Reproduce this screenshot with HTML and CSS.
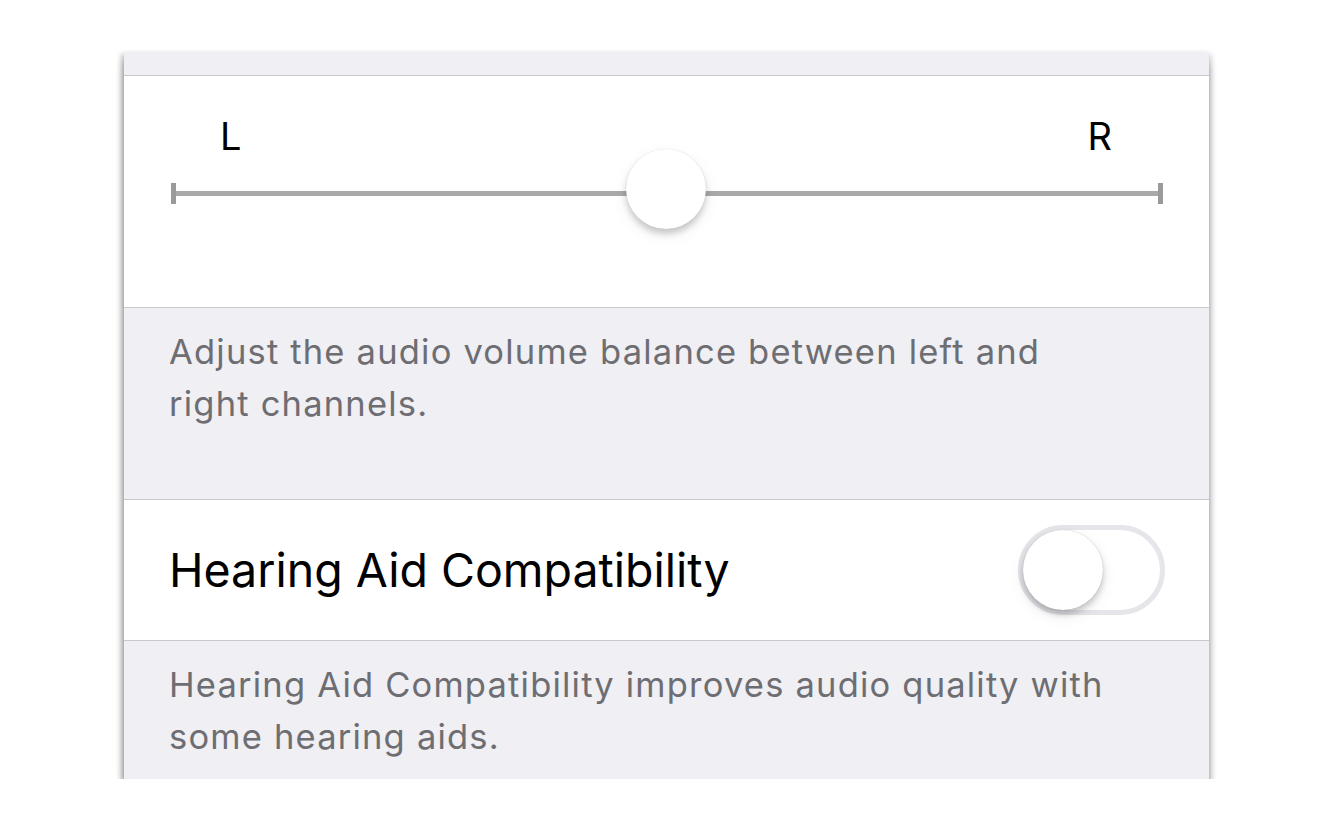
FILE: index.html
```html
<!DOCTYPE html>
<html>
<head>
<meta charset="utf-8">
<link rel="stylesheet" href="styles.css">
</head>
<body>
<div class="card">
  <div class="strip"></div>
  <div class="slider-section">
    <div class="labels"><span>L</span><span>R</span></div>
    <div class="track">
      <span class="cap cap-left"></span>
      <span class="cap cap-right"></span>
      <span class="thumb"></span>
    </div>
  </div>
  <div class="note note-balance">
    <p>Adjust the audio volume balance between left and<br>right channels.</p>
  </div>
  <div class="row">
    <span class="row-title">Hearing Aid Compatibility</span>
    <span class="switch"><span class="knob"></span></span>
  </div>
  <div class="note note-footer">
    <p>Hearing Aid Compatibility improves audio quality with<br>some hearing aids.</p>
  </div>
</div>
</body>
</html>
```
FILE: styles.css
```css
html, body {
  margin: 0;
  padding: 0;
  background: #ffffff;
}
body {
  font-family: Inter, "Noto Sans", sans-serif;
  padding-top: 52px;
  padding-left: 124px;
}
.card {
  width: 1085px;
  background: #efeff4;
  box-shadow: 0 9px 9px -2px rgba(0,0,0,0.45), -3px 2px 5px rgba(0,0,0,0.22), 3px 2px 5px rgba(0,0,0,0.12);
}
.strip {
  height: 23px;
  border-bottom: 1px solid #c8c7cc;
}
.slider-section {
  height: 231px;
  background: #fff;
  border-bottom: 1px solid #c8c7cc;
  padding: 0 47px 0 48px;
  display: flex;
  flex-direction: column;
}
.labels {
  display: flex;
  justify-content: space-between;
  padding: 0 50px 0 48px;
  margin-top: 37px;
  font-size: 38px;
  line-height: 46px;
  color: #000;
}
.track {
  position: relative;
  margin-top: 32px;
  height: 5px;
  background: #a9a9a9;
}
.cap {
  position: absolute;
  top: -8px;
  width: 5px;
  height: 21px;
  background: #9a9a9a;
}
.cap-left { left: -1px; }
.cap-right { right: -1px; }
.thumb {
  position: absolute;
  left: 454px;
  top: -42px;
  width: 80px;
  height: 80px;
  border-radius: 50%;
  background: #fff;
  box-shadow: 0 5px 6px rgba(0,0,0,0.18), 0 0 1px rgba(0,0,0,0.15), 0 6px 18px rgba(0,0,0,0.06);
}
.note p {
  margin: 0;
  font-size: 34.5px;
  letter-spacing: 1.2px;
  line-height: 52px;
  color: #6d6d72;
  padding-left: 45px;
}
.note-balance {
  height: 192px;
  border-bottom: 1px solid #c8c7cc;
  padding-top: 18px;
  box-sizing: border-box;
}
.row {
  height: 140px;
  background: #fff;
  border-bottom: 1px solid #c8c7cc;
  display: flex;
  align-items: center;
  justify-content: space-between;
  padding: 0 44px 0 45px;
}
.row-title {
  font-size: 46.5px;
  color: #000;
}
.switch {
  position: relative;
  width: 137px;
  height: 80px;
  border: 5px solid #e5e5ea;
  border-radius: 50px;
  background: #fff;
}
.knob {
  position: absolute;
  left: 0;
  top: 0;
  width: 80px;
  height: 80px;
  border-radius: 50%;
  background: #fff;
  box-shadow: 0 4px 6px rgba(0,0,0,0.2), 0 0 1px rgba(0,0,0,0.2), 0 6px 16px rgba(0,0,0,0.08);
}
.note-footer {
  height: 138px;
  padding-top: 18px;
  box-sizing: border-box;
}
```
